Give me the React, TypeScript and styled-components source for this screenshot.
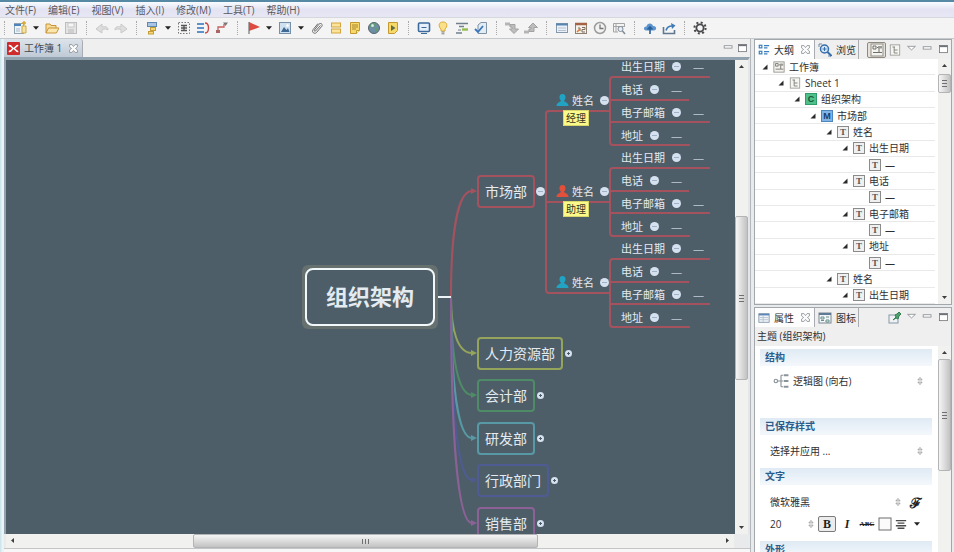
import React from "react";
import styled, { createGlobalStyle, css } from "styled-components";

const Global = createGlobalStyle`
  * { box-sizing: border-box; }
  body { margin: 0; overflow: hidden; }
  body, button, select, input {
    font-family: "Open Sans", "Noto Sans CJK SC", sans-serif;
    font-size: 10px;
    color: #2f2f33;
  }
  button, select { margin: 0; padding: 0; border: 0; background: none; }
  ul { margin: 0; padding: 0; list-style: none; }
  svg { display: block; flex: none; }
`;

/* ---------- icons ---------- */

type IconProps = { size?: number; children: React.ReactNode };
const Icon = ({ size = 14, children }: IconProps) => (
  <svg width={size} height={size} viewBox="0 0 14 14" fill="none" aria-hidden="true">
    {children}
  </svg>
);

const icons: Record<string, React.ReactNode> = {
  newMap: (
    <>
      <rect x="1.5" y="2.5" width="9" height="10" fill="#eef4f8" stroke="#8fa3b3" />
      <path d="M1 4h7" stroke="#4d83bd" strokeWidth="2" />
      <path d="M3 8h4M3 10h4" stroke="#a9bccb" />
      <path d="M9 5h4v7H9z" fill="#f6e3a1" stroke="#c9a94e" />
      <path d="M11 0v4M9 2h4" stroke="#d9a72f" strokeWidth="1.4" />
    </>
  ),
  open: (
    <>
      <path d="M1 12V3h4l1 1.5h5V7" stroke="#c8933a" fill="#f8dd9a" />
      <path d="M1 12l2.5-5H14l-2.6 5z" fill="#fbe7ae" stroke="#c8933a" />
    </>
  ),
  save: (
    <>
      <rect x="1.5" y="1.5" width="11" height="11" fill="#e4e4e4" stroke="#bdbdbd" />
      <rect x="4" y="2" width="6" height="4" fill="#f6f6f6" stroke="#c8c8c8" />
      <rect x="4" y="8" width="6" height="4" fill="#cfcfcf" />
    </>
  ),
  undo: (
    <>
      <path d="M1 8l6-5v3c4-1 6 0 6 3-1-1-3-1.500-6-.500V12z" fill="#dedede" stroke="#c9c9c9" />
    </>
  ),
  redo: (
    <>
      <path d="M13 8L7 3v3C3 5 1 6 1 9c1-1 3-1.500 6-.500V12z" fill="#dedede" stroke="#c9c9c9" />
    </>
  ),
  topic: (
    <>
      <rect x="2.500" y="1.500" width="9" height="4" fill="#a9c6e6" stroke="#6287b1" />
      <path d="M8 6v5H5" stroke="#8d8d8d" />
      <rect x="5.500" y="6.500" width="5" height="3" fill="#f5d778" stroke="#c59d36" />
      <rect x="3.500" y="10.500" width="5" height="2.500" fill="#f5d778" stroke="#c59d36" />
    </>
  ),
  boundary: (
    <>
      <rect x="1.500" y="1.500" width="11" height="11" stroke="#777" strokeDasharray="1.500 1.500" />
      <path d="M4 4.500h6M4 7h6M4 9.500h6M7 4v6" stroke="#555" strokeWidth="1.300" />
    </>
  ),
  summary: (
    <>
      <path d="M1 3h7M1 7h7M1 11h7" stroke="#5c92c9" strokeWidth="2" />
      <path d="M9 2c3 0 3.500 2 3.500 5S12 12 9 12" stroke="#cc4648" strokeWidth="1.400" />
    </>
  ),
  relation: (
    <>
      <path d="M3 10V6h6V3" stroke="#c9605d" strokeWidth="1.300" />
      <rect x="1" y="9" width="4" height="3" fill="#a66" />
      <path d="M8 1.500h5L10.500 5z" fill="#777" />
    </>
  ),
  flag: (
    <>
      <path d="M3 1v12" stroke="#8e8e8e" strokeWidth="1.500" />
      <path d="M3 1l11 5-11 4z" fill="#dd4a42" />
    </>
  ),
  image: (
    <>
      <rect x="1.500" y="1.500" width="11" height="11" fill="#cfe0f0" stroke="#7790aa" />
      <path d="M3 11l3-5 2.500 3L10 7l1.500 4z" fill="#3d6994" />
      <circle cx="9.500" cy="4.500" r="1.200" fill="#fff" />
    </>
  ),
  clip: (
    <path
      d="M10.500 4.500l-5 5.500c-.8.800-1.800-.2-1-1.100L9 3.200c1.500-1.800 4.300.1 2.800 2.100L6.500 11.500c-1.800 2.100-5.300-.4-3.500-2.800L8 2.500"
      stroke="#6a6a6a"
    />
  ),
  label: (
    <>
      <rect x="2.500" y="2" width="9" height="4" fill="#fbe39a" stroke="#d3a63d" />
      <rect x="2.500" y="8" width="9" height="4" fill="#fbe39a" stroke="#d3a63d" />
    </>
  ),
  note: (
    <>
      <path d="M2.500 1.500h9v8l-3 3h-6z" fill="#f7d96a" stroke="#c39a31" />
      <path d="M4 4h6M4 6h6M4 8h4" stroke="#a78432" />
      <path d="M8.500 12.500v-3h3" fill="#fff5c9" stroke="#c39a31" />
    </>
  ),
  globe: (
    <>
      <circle cx="7" cy="7" r="5.500" fill="#6d8ea3" stroke="#56646d" />
      <path d="M3 4c2-2 5-2 6-1L7 6 4 7zM8 8l3-1c0 2-1 3-3 4z" fill="#5da06a" />
      <circle cx="5.500" cy="4.500" r="1.500" fill="#d4e2ea" />
    </>
  ),
  audio: (
    <>
      <path d="M2.500 1.500h9v8l-3 3h-6z" fill="#f7d96a" stroke="#c39a31" />
      <path d="M5 4l4.500 3L5 10z" fill="#5f6d49" />
    </>
  ),
  present: (
    <>
      <rect x="1.500" y="2" width="11" height="8.500" rx="1" fill="#e6f1fb" stroke="#3d6a9d" strokeWidth="1.600" />
      <path d="M4.500 6.500h5" stroke="#3d6a9d" />
      <path d="M4 12.500h6" stroke="#3d6a9d" />
    </>
  ),
  bulb: (
    <>
      <path d="M7 1c5 0 4.500 5 2 7v2H5V8C2.500 6 2 1 7 1z" fill="#fbe08a" stroke="#dcab35" />
      <path d="M5.500 11h3M5.500 12.800h3" stroke="#7e7e7e" />
    </>
  ),
  gantt: (
    <>
      <path d="M1 2.500h12M4 5.500h5M1 12h6" stroke="#6f7f8c" strokeWidth="1.600" />
      <path d="M3 9h3" stroke="#6f7f8c" />
      <path d="M7 8.500h6" stroke="#93bd4b" strokeWidth="2.400" />
    </>
  ),
  task: (
    <>
      <path d="M4 4l3-2.500h5.500v11H4z" fill="#e3ebf3" stroke="#7f93a6" />
      <path d="M1 8l3 3 5-6" stroke="#3a76b9" strokeWidth="1.800" />
    </>
  ),
  drillDown: (
    <>
      <rect x="0" y="1.500" width="5" height="3" fill="#b5b5b5" />
      <path d="M5 3.500h5V8h3.500L9 12.500 4.500 8H7V6H5z" stroke="#a2a2a2" fill="#bdbdbd" />
    </>
  ),
  drillUp: (
    <>
      <rect x="0" y="9.500" width="5" height="3" fill="#b5b5b5" />
      <path d="M5 10.500h5V6.500h3.500L9 2 4.500 6.500H7V8H5z" stroke="#a2a2a2" fill="#bdbdbd" />
    </>
  ),
  panel: (
    <>
      <rect x="1.500" y="2.500" width="11" height="9" fill="#eaf1f8" stroke="#8699ab" />
      <path d="M1 3.500h12" stroke="#5985b3" strokeWidth="2" />
      <path d="M3 7h8M3 9.500h8" stroke="#b6c2cf" />
    </>
  ),
  calendar: (
    <>
      <rect x="1.500" y="2.500" width="11" height="10" fill="#f5f1e8" stroke="#8e7f73" />
      <path d="M1 3h12" stroke="#a56244" strokeWidth="2.500" />
      <path d="M4 7h2v3M8 6.500h3v2H8v2.500h3" stroke="#7d6e61" />
      <path d="M3 11l3-3" stroke="#df7b3c" strokeWidth="1.600" />
    </>
  ),
  clock: (
    <>
      <circle cx="7" cy="7" r="5.500" fill="#f2f2f2" stroke="#9b9b9b" strokeWidth="1.500" />
      <path d="M7 3.500V7.500h3.500" stroke="#777" strokeWidth="1.300" />
    </>
  ),
  inspect: (
    <>
      <path d="M1.500 11V2.500h11V6M1.500 11H6M4 3v8M2 5.500h10" stroke="#a4a4a4" />
      <circle cx="8.500" cy="8" r="2.500" fill="#e8eff6" stroke="#808c98" />
      <path d="M10.500 10l2.500 3" stroke="#808c98" strokeWidth="1.500" />
    </>
  ),
  cloud: (
    <>
      <path d="M3 9.500C-.5 9 1 5 3.500 5.500 4 1.500 9.500 1.500 10 5c4-.3 4 4.300 1 4.500z" fill="#5b95cf" />
      <path d="M7 13V7M4.500 8.500L7 6l2.500 2.500" stroke="#2b5f99" strokeWidth="1.600" />
    </>
  ),
  share: (
    <>
      <path d="M1.500 6v6.500h11V9" stroke="#5f7890" strokeWidth="1.600" />
      <path d="M4 9.500C5 6 8 5 10 5" stroke="#3e7cb8" strokeWidth="1.600" />
      <path d="M9 2l4.500 2.500L10 8z" fill="#3e7cb8" />
    </>
  ),
  gear: (
    <>
      <circle cx="7" cy="7" r="3.600" stroke="#48484c" strokeWidth="1.800" />
      <circle cx="7" cy="7" r="5.600" stroke="#48484c" strokeWidth="2" strokeDasharray="2 2.400" />
    </>
  ),
  brand: (
    <>
      <rect width="14" height="14" rx="1" fill="#cf2a2c" />
      <path d="M2 4c3-1 3 3 5 3s3-4 5-3M2 10c3 1 3-3 5-3s3 4 5 3" stroke="#fff" strokeWidth="1.800" />
    </>
  ),
  close: (
    <path d="M2 2h3l2 2.500L9 2h3v3L9.500 7 12 9v3H9L7 9.500 5 12H2V9l2.500-2L2 5z" fill="#fafafa" stroke="#858c94" />
  ),
  minimize: <rect x="1.500" y="3.500" width="10" height="3" fill="#fff" stroke="#83878c" />,
  maximize: (
    <>
      <rect x="2" y="2" width="10" height="9" fill="#fff" stroke="#6d7277" />
      <path d="M2 3h10" stroke="#6d7277" strokeWidth="2" />
    </>
  ),
  viewMenu: <path d="M2 3h10L7 7.500z" fill="#fff" stroke="#83878c" />,
  outline: (
    <>
      <rect x="1.500" y="1.500" width="3" height="3" stroke="#3b80bd" strokeWidth="1.400" />
      <rect x="1.500" y="8.500" width="3" height="3" stroke="#3b80bd" strokeWidth="1.400" />
      <path d="M7 2h6M7 4.500h4M7 9h6M7 11.500h4" stroke="#3b80bd" strokeWidth="1.400" />
    </>
  ),
  browse: (
    <>
      <path d="M1 1h3M1 1v3M13 13h-3" stroke="#6f8aa7" />
      <circle cx="6.500" cy="6" r="4" fill="#d5e7f6" stroke="#386ea9" strokeWidth="1.500" />
      <path d="M6.500 4v4M4.500 6h4" stroke="#386ea9" />
      <path d="M9.500 9l4 4" stroke="#386ea9" strokeWidth="2" />
    </>
  ),
  workbook: (
    <>
      <rect x="1" y="1" width="12" height="12" fill="#f4f3ee" stroke="#8f8f8b" />
      <path d="M3 3h3v3H3zM7 4.500h2v5h3M3 9.500h6" stroke="#6f6f6c" />
      <rect x="8" y="3" width="4" height="2.500" fill="#9b9b97" />
    </>
  ),
  sheet: (
    <>
      <rect x="1.500" y="1" width="11" height="12" fill="#f5f5f2" stroke="#9a9a96" />
      <path d="M4 3.500h3M6 3.500v7h4M6 7h4" stroke="#777774" />
    </>
  ),
  properties: (
    <>
      <rect x="1" y="2" width="12" height="10" fill="#f2f6fa" stroke="#7e93a8" />
      <path d="M1 3h12" stroke="#5c86b4" strokeWidth="2" />
      <path d="M2 6.500h10M2 9h10M6 4v8" stroke="#b3bfcb" />
    </>
  ),
  markers: (
    <>
      <rect x="1" y="2" width="12" height="10" fill="#f2f6fa" stroke="#7e8894" />
      <path d="M1 3h12" stroke="#5f7a95" strokeWidth="2" />
      <path d="M3 6h3v2H3zM3 9.500h3M8 6h3M8 9h3v2H8z" stroke="#669085" />
    </>
  ),
  pinView: (
    <>
      <rect x="1" y="4" width="9" height="8" fill="#eef2f5" stroke="#8797a5" />
      <path d="M5 9l3-3-1-2 2-1 2-2 2 2-2 2-1 3-2-1z" fill="#4fa06d" stroke="#357e52" />
    </>
  ),
  logic: (
    <>
      <circle cx="2.500" cy="7" r="1.500" stroke="#8a929a" />
      <path d="M4 7h3M7 2v10M7 2h2M7 7h2M7 12h2" stroke="#8a929a" />
      <path d="M9.500 2h4M9.500 7h4M9.500 12h4" stroke="#8a929a" strokeWidth="1.600" />
    </>
  ),
  stepper: <path d="M4 5.500L7 2l3 3.500zM4 8.500L7 12l3-3.500z" fill="#eee" stroke="#8b8b8b" />,
  align: <path d="M1 3h12M3 6h8M1 9h12M3 12h8" stroke="#4a4a4a" strokeWidth="1.600" />,
  colorBox: <rect x="1" y="1" width="12" height="12" fill="#fbfbfb" stroke="#6e6e6e" />,
};

const Caret = ({ color = "#222" }: { color?: string }) => (
  <svg width="6" height="4" viewBox="0 0 7 4" aria-hidden="true">
    <path d="M0 0h7L3.500 4z" fill={color} />
  </svg>
);

/* ---------- window frame ---------- */

const Window = styled.div`
  display: flex;
  flex-direction: column;
  height: 100vh;
  overflow: hidden;
  background: #eceded;
  border-top: 2px solid #5689a3;
`;

const MenuBar = styled.nav`
  display: flex;
  align-items: center;
  gap: 12px;
  height: 15px;
  padding-left: 5px;
  background: linear-gradient(#f8fcff, #e3e3f3 50%, #e6e6f4);
`;

const MenuItem = styled.button`
  line-height: 14px;
  color: #59595f;
  white-space: nowrap;
`;

const Toolbar = styled.div`
  display: flex;
  align-items: center;
  height: 22px;
  margin-left: -2px;
  background: #f4f4f4;
  border-top: 1px solid #d5d9de;
  border-bottom: 1px solid #c6c9cc;
`;

const ToolGroup = styled.div`
  display: flex;
  align-items: center;
  &::before {
    content: "";
    width: 1px;
    height: 14px;
    margin: 0 4px 0 6px;
    border-left: 1px dotted #a9a9a9;
  }
`;

const ToolButton = styled.button<{ $narrow?: boolean }>`
  display: flex;
  align-items: center;
  justify-content: center;
  width: ${(p) => (p.$narrow ? 13 : 19)}px;
  height: 18px;
`;

const Workspace = styled.div`
  flex: 1;
  min-height: 0;
  display: grid;
  grid-template-columns: minmax(0, 1fr) 198px;
  grid-template-rows: minmax(0, 1fr);
  gap: 3px;
  padding: 0 2px 0 4px;
  background: linear-gradient(90deg, #c8e2ea, #f2f8fa 3px, #e9eaeb 4px);
`;

/* ---------- tabs ---------- */

const TabBar = styled.div<{ $side?: boolean }>`
  display: flex;
  flex: none;
  height: ${(p) => (p.$side ? 19 : 18)}px;
  background: #efefef;
`;

const Tab = styled.div<{ $tone: "editor" | "active" | "idle" }>`
  display: flex;
  align-items: center;
  gap: 4px;
  padding: 0 2px 0 3px;
  border-right: 1px solid #a9adb2;
  ${(p) =>
    p.$tone === "editor" &&
    css`
      background: linear-gradient(#dde3ea, #bfcad6);
      border-radius: 0 3px 0 0;
      button { color: #44484e; }
    `}
  ${(p) => p.$tone === "active" && css`background: #fdfdfd;`}
`;

const TabLabel = styled.button`
  white-space: pre;
  line-height: 16px;
`;

const IconButton = styled.button<{ $pressed?: boolean }>`
  display: flex;
  align-items: center;
  justify-content: center;
  min-width: 14px;
  height: 16px;
  ${(p) =>
    p.$pressed &&
    css`
      width: 19px;
      border: 1px solid #8f8a80;
      border-radius: 2px;
      background: #e6e2d9;
    `}
`;

const TabTools = styled.div<{ $gap: number }>`
  display: flex;
  align-items: center;
  gap: ${(p) => p.$gap}px;
  margin-left: auto;
  padding-right: 1px;
`;

/* ---------- scroll bars ---------- */

const Track = styled.div<{ $vertical?: boolean }>`
  display: flex;
  flex: none;
  flex-direction: ${(p) => (p.$vertical ? "column" : "row")};
  ${(p) => (p.$vertical ? "width: 13px;" : "height: 14px; margin: 0 16px 0 2px;")}
  background: #f1f1f0;
`;

const TrackArrow = styled.button`
  display: flex;
  align-items: center;
  justify-content: center;
  flex: none;
  width: 13px;
  height: 13px;
`;

const TrackSpace = styled.div<{ $part: number }>`
  flex: ${(p) => p.$part} 1 0;
`;

const Thumb = styled.div<{ $part: number; $vertical?: boolean }>`
  flex: ${(p) => p.$part} 1 0;
  display: flex;
  align-items: center;
  justify-content: center;
  border: 1px solid #b2b4b6;
  border-radius: 2px;
  background: linear-gradient(${(p) => (p.$vertical ? "90deg" : "180deg")}, #f5f5f5, #dcdcdc 50%, #c2c2c2);
  svg { transform: rotate(${(p) => (p.$vertical ? 90 : 0)}deg); }
`;

const arrowPaths = {
  up: "M1 5L3.500 2 6 5z",
  down: "M1 2h5L3.500 5z",
  left: "M5 1v5L2 3.500z",
  right: "M2 1v5l3-2.500z",
};

const Arrow = ({ dir }: { dir: keyof typeof arrowPaths }) => (
  <TrackArrow aria-label={dir}>
    <svg width="7" height="7" viewBox="0 0 7 7">
      <path d={arrowPaths[dir]} fill="#3d3d3d" />
    </svg>
  </TrackArrow>
);

const ScrollBar = ({ vertical, parts }: { vertical?: boolean; parts: [number, number, number] }) => (
  <Track $vertical={vertical}>
    <Arrow dir={vertical ? "up" : "left"} />
    <TrackSpace $part={parts[0]} />
    <Thumb $part={parts[1]} $vertical={vertical}>
      <svg width="7" height="5" viewBox="0 0 7 5">
        <path d="M.5 0v5M3.500 0v5M6.500 0v5" stroke="#6f6f6f" />
      </svg>
    </Thumb>
    <TrackSpace $part={parts[2]} />
    <Arrow dir={vertical ? "down" : "right"} />
  </Track>
);

/* ---------- mind map ---------- */

const Editor = styled.main`
  display: flex;
  flex-direction: column;
  min-width: 0;
  border-right: 1px solid #b4b8bc;
`;

const EditorBody = styled.div`
  flex: 1;
  min-height: 0;
  display: flex;
  border-top: 3px solid #93a2af;
  border-left: 2px solid #93a2af;
  border-right: 2px solid #e4e6e8;
`;

const EditorFoot = styled.div`
  display: flex;
  flex: none;
  height: 4px;
  border-top: 1px solid #c3c5c7;
  background: #f7f7f7;
`;

const Canvas = styled.section`
  position: relative;
  flex: 1;
  overflow: hidden;
  background: #4e5e69;
  color: #e3eaf0;
`;

const Links = styled.svg`
  position: absolute;
  left: 0;
  top: 0;
`;

const Root = styled.div`
  position: absolute;
  left: 296px;
  top: 205px;
  width: 136px;
  height: 64px;
  padding: 3px;
  border-radius: 6px;
  background: #66706f;
`;

const RootLabel = styled.div`
  display: flex;
  align-items: center;
  justify-content: center;
  height: 100%;
  border: 2px solid #f2f7fa;
  border-radius: 8px;
  background: #4e5e69;
  font-size: 22px;
  font-weight: 700;
  line-height: 28px;
  padding-bottom: 3px;
`;

const BranchBox = styled.div<{ $top: number }>`
  position: absolute;
  left: 471px;
  top: ${(p) => p.$top}px;
  display: flex;
  align-items: center;
`;

const BranchLabel = styled.div<{ $color: string }>`
  height: 33px;
  padding: 0 6px;
  border: 2px solid ${(p) => p.$color};
  border-radius: 4px;
  font-size: 14px;
  line-height: 29px;
  white-space: nowrap;
`;

const Fold = styled.button<{ $open?: boolean }>`
  flex: none;
  width: ${(p) => (p.$open ? 9 : 7)}px;
  height: ${(p) => (p.$open ? 9 : 7)}px;
  border-radius: 50%;
  background: #d5e1ef;
  display: flex;
  align-items: center;
  justify-content: center;
`;

const BranchFold = styled.span`
  display: flex;
  justify-content: center;
  width: 11px;
`;

const PersonRow = styled.div<{ $top: number }>`
  position: absolute;
  left: 550px;
  top: ${(p) => p.$top}px;
  display: flex;
  align-items: center;
  gap: 3px;
  height: 16px;
  font-size: 11px;
  white-space: nowrap;
  ${Fold} { margin-left: 3px; }
`;

const RoleTag = styled.div<{ $top: number }>`
  position: absolute;
  left: 557px;
  top: ${(p) => p.$top}px;
  padding: 0 2px;
  background: #fbf98a;
  border: 1px solid #d8d56c;
  color: #33331f;
  font-size: 10px;
  line-height: 14px;
`;

const DetailRow = styled.div<{ $top: number }>`
  position: absolute;
  left: 615px;
  top: ${(p) => p.$top}px;
  display: flex;
  align-items: center;
  gap: 7px;
  height: 16px;
  font-size: 11px;
  white-space: nowrap;
`;

const Blank = styled.span`
  margin-left: 5px;
  color: #aebac3;
`;

const FoldMark = ({ open }: { open?: boolean }) => (
  <Fold $open={open} aria-label={open ? "收起" : "展开"}>
    <svg width="5" height="5" viewBox="0 0 5 5">
      <path d={open ? "M0 2.500h5" : "M1 2.500h3M2.500 1v3"} stroke={open ? "#9fb1c6" : "#4e5e69"} />
    </svg>
  </Fold>
);

const branches = [
  { name: "市场部", color: "#a5525f", top: 115, y: 131, open: true },
  { name: "人力资源部", color: "#94a45a", top: 277, y: 293 },
  { name: "会计部", color: "#4f8b66", top: 319, y: 335 },
  { name: "研发部", color: "#5799a4", top: 362, y: 378 },
  { name: "行政部门", color: "#4f5b93", top: 404, y: 420 },
  { name: "销售部", color: "#8c6296", top: 447, y: 463 },
];

const people = [
  { y: 40, color: "#21a3c4", role: "经理" },
  { y: 131, color: "#e2503b", role: "助理" },
  { y: 222, color: "#21a3c4", role: "" },
];

const details = ["出生日期", "电话", "电子邮箱", "地址"];

const MindMap = () => (
  <Canvas aria-label="组织架构">
    <Links width="729" height="480" viewBox="0 0 729 480" fill="none" aria-hidden="true">
      {branches.map((b) => {
        const bend = 237 + (b.y - 237) * 0.62;
        return (
          <g key={b.name} stroke={b.color}>
            <path d={`M445 237C445 ${bend} 452 ${b.y} 466 ${b.y}`} strokeWidth="2" />
            <path d={`M465 ${b.y - 3}l6 3-6 3z`} fill={b.color} stroke="none" />
          </g>
        );
      })}
      <path d="M432 237h13" stroke="#eef3f6" strokeWidth="2" />
      <g stroke="#a5525f" strokeWidth="2">
        <path d="M604 51H543q-3 0-3 3V230q0 3 3 3H604M540 142H604" />
        {people.map((p) => (
          <path
            key={p.y}
            d={`M704 ${p.y - 23}H607q-3 0-3 3v62q0 3 3 3H684M604 ${p.y}H683M604 ${p.y + 22}H704`}
          />
        ))}
      </g>
    </Links>
    <Root>
      <RootLabel>组织架构</RootLabel>
    </Root>
    {branches.map((b) => (
      <BranchBox key={b.name} $top={b.top}>
        <BranchLabel $color={b.color}>{b.name}</BranchLabel>
        <BranchFold>
          <FoldMark open={b.open} />
        </BranchFold>
      </BranchBox>
    ))}
    {people.map((p) => (
      <React.Fragment key={p.y}>
        <PersonRow $top={p.y - 8}>
          <svg width="13" height="13" viewBox="0 0 13 13" aria-hidden="true">
            <path
              d="M6.500 0c2.300 0 3 1.500 3 3.200C9.500 4.800 8.600 6.200 8 6.800c0 1.200 4.500 1.500 4.500 5.200H.5C.5 8.300 5 8 5 6.800 4.400 6.200 3.500 4.800 3.500 3.200 3.500 1.500 4.200 0 6.500 0z"
              fill={p.color}
            />
          </svg>
          姓名
          <FoldMark open />
        </PersonRow>
        {p.role && <RoleTag $top={p.y + 10}>{p.role}</RoleTag>}
        {details.map((d, i) => (
          <DetailRow key={d} $top={p.y - 42 + i * 23}>
            {d}
            <FoldMark open />
            <Blank>—</Blank>
          </DetailRow>
        ))}
      </React.Fragment>
    ))}
  </Canvas>
);

/* ---------- side views ---------- */

const Side = styled.aside`
  display: flex;
  flex-direction: column;
  gap: 2px;
  min-height: 0;
`;

const View = styled.section<{ $fill?: boolean }>`
  display: flex;
  flex-direction: column;
  flex: ${(p) => (p.$fill ? "1 1 0" : "none")};
  min-height: 0;
  overflow: hidden;
  border: 1px solid #a2a7ac;
  ${(p) => p.$fill && "border-bottom: 0;"}
`;

const ViewBody = styled.div`
  display: flex;
  flex: 1;
  min-height: 0;
  background: #fff;
`;

const Tree = styled.ul`
  flex: 1;
  display: grid;
  grid-auto-rows: 1fr;
  height: 245px;
`;

const TreeRow = styled.li<{ $level: number }>`
  display: flex;
  align-items: center;
  gap: 4px;
  padding-left: ${(p) => 6 + p.$level * 16}px;
  border-bottom: 1px solid #e9e9e9;
  line-height: 14px;
  white-space: nowrap;
  margin-right: 3px;
`;

const Twisty = styled.button<{ $leaf?: boolean }>`
  width: 8px;
  height: 8px;
  visibility: ${(p) => (p.$leaf ? "hidden" : "visible")};
`;

const Kind = styled.span<{ $kind: string }>`
  flex: none;
  width: 12px;
  height: 12px;
  border: 1px solid;
  font: 700 9px/10px "Liberation Serif", serif;
  text-align: center;
  ${(p) =>
    p.$kind === "C"
      ? "background: #4fc08a; border-color: #2f9d69; color: #12573a;"
      : p.$kind === "M"
        ? "background: #7fb4e6; border-color: #4f86bd; color: #153f70;"
        : "background: #f0f0f0; border-color: #8b8b8b; color: #555;"}
  ${(p) => p.$kind !== "T" && `font-family: "Liberation Sans", sans-serif;`}
`;

const outline: [number, string, string][] = [
  [0, "workbook", "工作簿"],
  [1, "sheet", "Sheet 1"],
  [2, "C", "组织架构"],
  [3, "M", "市场部"],
  [4, "T", "姓名"],
  [5, "T", "出生日期"],
  [6, "T", "—"],
  [5, "T", "电话"],
  [6, "T", "—"],
  [5, "T", "电子邮箱"],
  [6, "T", "—"],
  [5, "T", "地址"],
  [6, "T", "—"],
  [4, "T", "姓名"],
  [5, "T", "出生日期"],
];

const OutlineView = () => (
  <View>
    <TabBar $side>
      <Tab $tone="active">
        <Icon size={12}>{icons.outline}</Icon>
        <TabLabel>大纲</TabLabel>
        <IconButton aria-label="关闭"><Icon size={11}>{icons.close}</Icon></IconButton>
      </Tab>
      <Tab $tone="idle">
        <Icon>{icons.browse}</Icon>
        <TabLabel>浏览</TabLabel>
      </Tab>
      <TabTools $gap={2}>
        <IconButton $pressed aria-label="工作簿"><Icon>{icons.workbook}</Icon></IconButton>
        <IconButton aria-label="画布"><Icon size={12}>{icons.sheet}</Icon></IconButton>
        <IconButton aria-label="菜单"><Icon size={11}>{icons.viewMenu}</Icon></IconButton>
        <IconButton aria-label="最小化"><Icon size={11}>{icons.minimize}</Icon></IconButton>
        <IconButton aria-label="最大化"><Icon size={11}>{icons.maximize}</Icon></IconButton>
      </TabTools>
    </TabBar>
    <ViewBody>
      <Tree>
        {outline.map(([level, kind, label], i) => (
          <TreeRow key={i} $level={level}>
            <Twisty $leaf={label === "—"} aria-label="折叠">
              <svg width="8" height="8" viewBox="0 0 8 8">
                <path d="M6.500 1.500v5h-5z" fill="#2a2a2a" />
              </svg>
            </Twisty>
            {kind.length > 1 ? <Icon size={12}>{icons[kind]}</Icon> : <Kind $kind={kind}>{kind}</Kind>}
            <span>{label}</span>
          </TreeRow>
        ))}
      </Tree>
      <ScrollBar vertical parts={[2, 17, 196]} />
    </ViewBody>
  </View>
);

const Subject = styled.div`
  flex: none;
  height: 19px;
  padding-left: 2px;
  line-height: 18px;
  background: #efefef;
`;

const Form = styled.div`
  flex: 1;
  min-width: 0;
  overflow: hidden;
  padding: 3px 6px 0 5px;
`;

const SectionTitle = styled.h2`
  margin: 0;
  height: 17px;
  padding-left: 5px;
  background: linear-gradient(#dfeaf4, #f4f8fc);
  color: #2c5c8c;
  font-size: 10px;
  font-weight: 700;
  line-height: 17px;
`;

const SectionBody = styled.div<{ $pad: string }>`
  padding: ${(p) => p.$pad};
`;

const FieldRow = styled.div<{ $gap?: number }>`
  display: flex;
  align-items: center;
  gap: ${(p) => p.$gap ?? 4}px;
  height: 22px;
`;

const Picker = styled.label<{ $width?: number }>`
  display: flex;
  align-items: center;
  gap: 4px;
  ${(p) => (p.$width ? `flex: none; width: ${p.$width}px;` : "flex: 1;")}
  min-width: 0;
`;

const Select = styled.select`
  appearance: none;
  flex: 1;
  min-width: 0;
  line-height: 16px;
`;

const FormatButton = styled.button<{ $on?: boolean; $look?: "bold" | "italic" | "strike" | "script" }>`
  display: flex;
  align-items: center;
  justify-content: center;
  flex: none;
  width: 18px;
  height: 16px;
  color: #1e1e1e;
  font-family: "Liberation Serif", serif;
  font-size: 12px;
  font-weight: 700;
  border: 1px solid ${(p) => (p.$on ? "#7b7b7b" : "transparent")};
  border-radius: 2px;
  ${(p) => p.$on && "background: #ececec;"}
  ${(p) => p.$look === "italic" && "font-style: italic;"}
  ${(p) => p.$look === "script" && "font-size: 14px; font-family: 'DejaVu Serif', serif;"}
  ${(p) => p.$look === "strike" && "font-size: 7px; text-decoration: line-through;"}
`;

const PickerField = ({ label, value, width, icon }: { label: string; value: string; width?: number; icon?: string }) => (
  <Picker $width={width}>
    {icon && <Icon size={16}>{icons[icon]}</Icon>}
    <Select aria-label={label} defaultValue={value}>
      <option>{value}</option>
    </Select>
    <Icon size={10}>{icons.stepper}</Icon>
  </Picker>
);

const PropertiesView = () => (
  <View $fill>
    <TabBar $side>
      <Tab $tone="active">
        <Icon size={12}>{icons.properties}</Icon>
        <TabLabel>属性</TabLabel>
        <IconButton aria-label="关闭"><Icon size={11}>{icons.close}</Icon></IconButton>
      </Tab>
      <Tab $tone="idle">
        <Icon>{icons.markers}</Icon>
        <TabLabel>图标</TabLabel>
      </Tab>
      <TabTools $gap={2}>
        <IconButton aria-label="固定"><Icon>{icons.pinView}</Icon></IconButton>
        <IconButton aria-label="菜单"><Icon size={11}>{icons.viewMenu}</Icon></IconButton>
        <IconButton aria-label="最小化"><Icon size={11}>{icons.minimize}</Icon></IconButton>
        <IconButton aria-label="最大化"><Icon size={11}>{icons.maximize}</Icon></IconButton>
      </TabTools>
    </TabBar>
    <Subject>主题 (组织架构)</Subject>
    <ViewBody>
      <Form>
        <SectionTitle>结构</SectionTitle>
        <SectionBody $pad="4px 7px 26px 13px">
          <FieldRow><PickerField label="结构" value="逻辑图 (向右)" icon="logic" /></FieldRow>
        </SectionBody>
        <SectionTitle>已保存样式</SectionTitle>
        <SectionBody $pad="5px 7px 6px 10px">
          <FieldRow><PickerField label="样式" value="选择并应用 ..." /></FieldRow>
        </SectionBody>
        <SectionTitle>文字</SectionTitle>
        <SectionBody $pad="6px 7px 6px 10px">
          <FieldRow>
            <PickerField label="字体" value="微软雅黑" />
            <FormatButton $look="script" aria-label="字体设置">ℱ</FormatButton>
          </FieldRow>
          <FieldRow $gap={2}>
            <PickerField label="字号" value="20" width={46} />
            <FormatButton $on aria-label="粗体">B</FormatButton>
            <FormatButton $look="italic" aria-label="斜体">I</FormatButton>
            <FormatButton $look="strike" aria-label="删除线">ABC</FormatButton>
            <IconButton aria-label="颜色"><Icon>{icons.colorBox}</Icon></IconButton>
            <IconButton aria-label="对齐"><Icon size={12}>{icons.align}</Icon></IconButton>
            <IconButton aria-label="对齐选项"><Caret /></IconButton>
          </FieldRow>
        </SectionBody>
        <SectionTitle>外形</SectionTitle>
      </Form>
      <Track $vertical>
        <Arrow dir="up" />
        <Thumb $part={112} $vertical>
          <svg width="7" height="5" viewBox="0 0 7 5">
            <path d="M.5 0v5M3.500 0v5M6.500 0v5" stroke="#6f6f6f" />
          </svg>
        </Thumb>
        <TrackSpace $part={82} />
      </Track>
    </ViewBody>
  </View>
);

/* ---------- app ---------- */

const menus = ["文件(F)", "编辑(E)", "视图(V)", "插入(I)", "修改(M)", "工具(T)", "帮助(H)"];

const toolGroups = [
  ["newMap", "caret", "open", "save"],
  ["undo", "redo"],
  ["topic", "caret", "boundary", "summary", "relation"],
  ["flag", "caret", "image", "caret", "clip", "label", "note", "globe", "audio"],
  ["present", "bulb", "gantt", "task"],
  ["drillDown", "drillUp"],
  ["panel", "calendar", "clock", "inspect"],
  ["cloud", "share"],
  ["gear"],
];

export default function App() {
  return (
    <Window>
      <Global />
      <MenuBar>
        {menus.map((m) => (
          <MenuItem key={m}>{m}</MenuItem>
        ))}
      </MenuBar>
      <Toolbar role="toolbar">
        {toolGroups.map((group, g) => (
          <ToolGroup key={g}>
            {group.map((name, i) => (
              <ToolButton key={i} $narrow={name === "caret"} aria-label={name}>
                {name === "caret" ? <Caret /> : <Icon>{icons[name]}</Icon>}
              </ToolButton>
            ))}
          </ToolGroup>
        ))}
      </Toolbar>
      <Workspace>
        <Editor>
          <TabBar>
            <Tab $tone="editor">
              <Icon size={13}>{icons.brand}</Icon>
              <TabLabel>工作簿 1</TabLabel>
              <IconButton aria-label="关闭"><Icon size={11}>{icons.close}</Icon></IconButton>
            </Tab>
            <TabTools $gap={0}>
              <IconButton aria-label="最小化"><Icon size={11}>{icons.minimize}</Icon></IconButton>
              <IconButton aria-label="最大化"><Icon size={11}>{icons.maximize}</Icon></IconButton>
            </TabTools>
          </TabBar>
          <EditorBody>
            <MindMap />
            <ScrollBar vertical parts={[144, 162, 142]} />
          </EditorBody>
          <ScrollBar parts={[174, 344, 183]} />
          <EditorFoot />
        </Editor>
        <Side>
          <OutlineView />
          <PropertiesView />
        </Side>
      </Workspace>
    </Window>
  );
}
